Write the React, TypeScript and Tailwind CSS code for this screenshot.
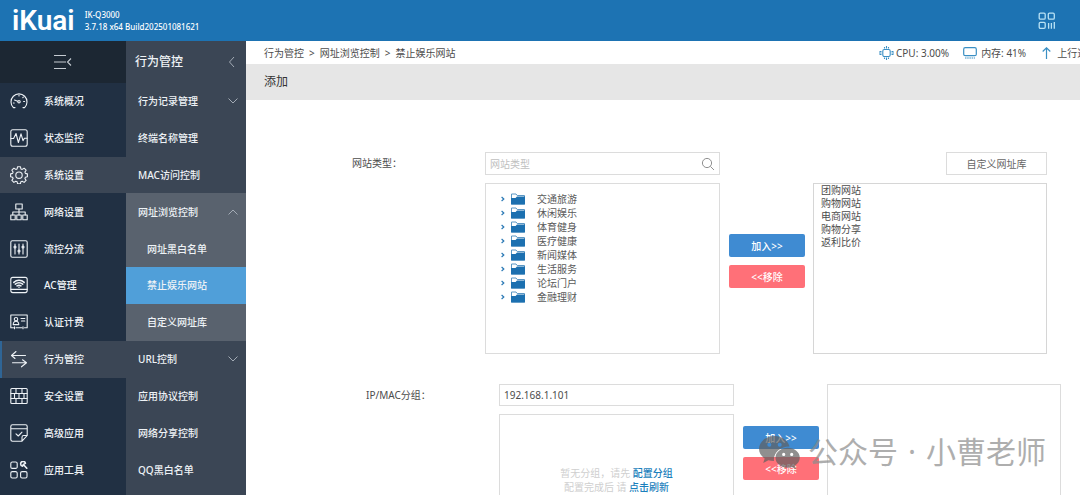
import { ReactNode } from "react";

const svgProps = {
  width: 18,
  height: 18,
  viewBox: "0 0 18 18",
  fill: "none",
  stroke: "currentColor",
  strokeWidth: 1.1,
  strokeLinecap: "round" as const,
  strokeLinejoin: "round" as const,
  "aria-hidden": true,
};

const icons: Record<string, ReactNode> = {
  gauge: (
    <>
      <path d="M5 15.600H3.400A8 8 0 1 1 14.600 15.600H13" />
      <path d="M4.500 8l3.200 1.200M9 3.200v.8M13.300 5.200l-.5.500M14.600 9.500h-1M3.400 11h.8" />
      <circle cx="9" cy="9.700" r="1.200" />
    </>
  ),
  pulse: (
    <>
      <rect x="0.8" y="0.8" width="16.4" height="16.4" rx="2" />
      <path d="M1 9.500h2.600L6 4.500l2.400 9 2.600-8.600 2 6.800 1.400-2.400H17" />
    </>
  ),
  gear: (
    <>
      <path d="M7.600 .7h2.800l.5 2.200 1.300.5 1.900-1.200 2 2-1.200 1.900.5 1.300 2 .5v2.800l-2 .5-.5 1.300 1.200 1.900-2 2-1.900-1.200-1.300.5-.5 2.100H7.600l-.5-2.100-1.300-.5-1.900 1.200-2-2 1.200-1.900-.5-1.300-2-.5V7.900l2-.5.5-1.300-1.200-1.900 2-2 1.900 1.200 1.300-.5z" />
      <circle cx="9" cy="9.200" r="3.200" />
    </>
  ),
  network: (
    <>
      <rect x="5.800" y="1" width="6.400" height="5" />
      <path d="M9 6v3M2.800 12V9h12.400v3M9 9v3" />
      <rect x="0.800" y="12" width="4.400" height="4.800" />
      <rect x="6.800" y="12" width="4.400" height="4.800" />
      <rect x="12.800" y="12" width="4.400" height="4.800" />
    </>
  ),
  sliders: (
    <>
      <rect x="0.800" y="0.800" width="16.400" height="16.400" rx="1.500" />
      <path d="M5 4v10M9 4v10M13 4v10" />
      <circle cx="5" cy="7" r="1" />
      <circle cx="9" cy="11" r="1" />
      <circle cx="13" cy="7" r="1" />
    </>
  ),
  ac: (
    <>
      <rect x="0.800" y="1.400" width="16.400" height="15.200" rx="2" />
      <path d="M1 13.400h16" />
      <path d="M3.800 6.400c3-2.800 7.400-2.800 10.400 0M5.300 8.200c2.200-1.800 5.200-1.800 7.400 0M7 9.900c1.200-.9 2.800-.9 4 0M9 11.200v.1" strokeWidth="1.500" />
    </>
  ),
  idcard: (
    <>
      <path d="M3.500 14.800H.800V2h16.400v12.800H14.500M6 14.800h6" />
      <circle cx="6" cy="6.200" r="1.700" />
      <path d="M3.200 11.600c.2-4.400 5.400-4.400 5.600 0zM11 5.500h3.800M11.500 8h3.300M4.500 13.800v2M13 13.800v2" />
    </>
  ),
  arrows: (
    <>
      <path d="M15.500 5.500H1.500L6 1.500M1.500 5.500l3.500 3" />
      <path d="M2.500 12.800h14L12.500 9.800M16.500 12.800l-5 4" />
    </>
  ),
  wall: (
    <>
      <rect x="0.800" y="1.500" width="16.400" height="15" rx="1" />
      <path d="M1 6.500h16M1 11.500h16M6 1.500v5M12 1.500v5M9 6.500v5M4.500 6.500v5M14 6.500v5M6 11.500v5M12 11.500v5" />
    </>
  ),
  sheet: (
    <path d="M17.200 11.500V2.500Q17.200.800 15.500.800h-13Q.800.800.800 2.500v13q0 1.700 1.700 1.700h9.500zM12 17v-3.800q0-1.700 1.700-1.700h3.500M1 4.800h16M6 9.800l2.300 2.200 3.700-3.800" />
  ),
  tools: (
    <>
      <rect x="0.800" y="1" width="6.400" height="6.400" rx="1.500" />
      <rect x="0.800" y="10.600" width="6.400" height="6.400" rx="1.500" />
      <rect x="10.600" y="10.600" width="6.400" height="6.400" rx="1.500" />
      <path d="M12.600 5.200a2.400 2.400 0 1 1 2.800-2.800L13.400 3.400zM14 4.200l2.800 3" strokeWidth="1.600" />
    </>
  ),
};

const mainMenu = [
  { label: "系统概况", icon: "gauge" },
  { label: "状态监控", icon: "pulse" },
  { label: "系统设置", icon: "gear", state: "hover" },
  { label: "网络设置", icon: "network" },
  { label: "流控分流", icon: "sliders" },
  { label: "AC管理", icon: "ac" },
  { label: "认证计费", icon: "idcard" },
  { label: "行为管控", icon: "arrows", state: "current" },
  { label: "安全设置", icon: "wall" },
  { label: "高级应用", icon: "sheet" },
  { label: "应用工具", icon: "tools" },
];

const subMenu = [
  { label: "行为记录管理", arrow: "down" },
  { label: "终端名称管理" },
  { label: "MAC访问控制" },
  { label: "网址浏览控制", arrow: "up", tone: "open" },
  { label: "网址黑白名单", tone: "child" },
  { label: "禁止娱乐网站", tone: "active" },
  { label: "自定义网址库", tone: "child" },
  { label: "URL控制", arrow: "down" },
  { label: "应用协议控制" },
  { label: "网络分享控制" },
  { label: "QQ黑白名单" },
];

const subTone: Record<string, string> = {
  open: "bg-[#59626e] pl-3",
  child: "bg-[#59626e] pl-[21px]",
  active: "bg-[#509fd9] pl-[21px]",
};

const mainTone: Record<string, string> = {
  hover: "bg-[#3b4655] border-[#3b4655]",
  current: "bg-[#3b4655] border-[#2f6596]",
};

const categories = ["交通旅游", "休闲娱乐", "体育健身", "医疗健康", "新闻媒体", "生活服务", "论坛门户", "金融理财"];
const selected = ["团购网站", "购物网站", "电商网站", "购物分享", "返利比价"];

function Chevron({ dir }: { dir: string }) {
  const d = dir === "down" ? "M1.500 3.500l4.500 4.500 4.500-4.500" : dir === "up" ? "M1.500 8.500l4.500-4.500 4.500 4.500" : "M8 1l-4.500 5 4.500 5";
  return (
    <svg width="12" height="12" viewBox="0 0 12 12" fill="none" stroke="#a3abb5" strokeWidth="1" aria-hidden>
      <path d={d} />
    </svg>
  );
}

function Folder() {
  return (
    <svg width="14" height="12" viewBox="0 0 14 12" aria-hidden>
      <path d="M.5 11V1h4.500l1.200 1.500h7.300V11z" fill="#fff" stroke="#5b97c4" />
      <path d="M0 11.500V5h4.500L6 3.600h8v7.900z" fill="#1c70b0" />
    </svg>
  );
}

function TransferButtons() {
  return (
    <div className="flex w-[76px] flex-col gap-2 font-medium text-white">
      <button className="h-[23px] rounded-xs bg-[#3f8bd2]">加入&gt;&gt;</button>
      <button className="h-[23px] rounded-xs bg-[#ff7078]">&lt;&lt;移除</button>
    </div>
  );
}

export default function App() {
  return (
    <div className="relative flex h-screen flex-col overflow-hidden bg-white text-[10px] leading-[14px] text-[#4c4c4c] [font-family:'Noto_Sans','Noto_Sans_CJK_SC',sans-serif]">
      <header className="flex h-[41px] shrink-0 items-center bg-[#1d73b3] pr-6 pl-3 text-white">
        <span className="text-[28px] leading-7 font-semibold [font-family:Roboto,sans-serif]">iKuai</span>
        <div className="ml-2.5 text-[8px] leading-3 font-medium">
          <div>IK-Q3000</div>
          <div>3.7.18 x64 Build202501081621</div>
        </div>
        <button className="ml-auto" aria-label="应用">
          <svg width="18" height="18" viewBox="0 0 18 18" fill="none" stroke="#b9e2f5" strokeWidth="1.300">
            <rect x="1.200" y="1.200" width="6" height="6" rx="1.200" />
            <rect x="10.300" y="1.200" width="6" height="6" rx="1.200" />
            <rect x="1.200" y="10.300" width="6" height="6" rx="1.200" />
            <path d="M10.600 11v5.800M13.400 11v5.800M16.300 10v6.800" />
          </svg>
        </button>
      </header>

      <div className="flex min-h-0 flex-1">
        <nav className="w-[126px] shrink-0 bg-[#213043] text-[#eef2f6]">
          <button className="flex h-[42px] w-full items-center justify-center bg-[#1c2733]" aria-label="收起菜单">
            <svg width="18" height="16" viewBox="0 0 18 16" fill="none" stroke="#c5cbd2" strokeWidth="1.100">
              <path d="M0 1.500h12M0 8h12M0 14.500h12M17 4.500L13.500 8l3.500 3.500" />
            </svg>
          </button>
          <ul className="grid h-[405px] auto-rows-fr font-medium">
            {mainMenu.map((m) => (
              <li key={m.label} className="grid">
                <a
                  href="#"
                  className={`flex items-center gap-4 border-l-2 pl-2 ${m.state ? mainTone[m.state] : "border-[#213043]"}`}
                >
                  <svg {...svgProps}>{icons[m.icon]}</svg>
                  {m.label}
                </a>
              </li>
            ))}
          </ul>
        </nav>

        <nav className="w-[120px] shrink-0 bg-[#3b4655] text-[#eef2f6]">
          <div className="flex h-[42px] items-center justify-between pr-2 pl-[9px] text-xs font-medium">
            行为管控
            <Chevron dir="left" />
          </div>
          <ul className="grid h-[405px] auto-rows-fr font-medium">
            {subMenu.map((m) => (
              <li key={m.label} className="grid">
                <a href="#" className={`flex items-center justify-between pr-[7px] ${m.tone ? subTone[m.tone] : "pl-3"}`}>
                  {m.label}
                  {m.arrow && <Chevron dir={m.arrow} />}
                </a>
              </li>
            ))}
          </ul>
        </nav>

        <main className="min-w-0 flex-1 overflow-hidden">
          <div className="flex h-[23px] items-center justify-between pl-[18px] whitespace-nowrap">
            <div className="flex gap-[5px]">
              <span>行为管控</span>
              <span>&gt;</span>
              <span>网址浏览控制</span>
              <span>&gt;</span>
              <span>禁止娱乐网站</span>
            </div>
            <div className="flex w-[201px] shrink-0 overflow-hidden">
              <span className="mr-[14px] flex shrink-0 items-center gap-0.5">
                <svg width="15" height="14" viewBox="0 0 15 14" fill="none" stroke="#3a8fc4" strokeWidth="1.100" aria-hidden>
                  <rect x="3.800" y="3.500" width="7.400" height="7" rx="1.500" />
                  <path d="M5.500 1v1.500M7.500 0v2.500M9.500 1v1.500M5.500 11.500V13M7.500 11.500V14M9.500 11.500V13M.5 5.500H2.500M0 7H2.500M.5 8.500H2.500M12.500 5.500h2M12.500 7H15M12.500 8.500h2" />
                </svg>
                CPU: 3.00%
              </span>
              <span className="mr-4 flex shrink-0 items-center gap-1">
                <svg width="14" height="12" viewBox="0 0 14 12" fill="none" stroke="#3a8fc4" strokeWidth="1.200" aria-hidden>
                  <rect x="0.700" y="0.700" width="12.600" height="8" rx="1.500" />
                  <path d="M2 11h10" strokeDasharray="1.500 .7" />
                </svg>
                内存: 41%
              </span>
              <span className="flex shrink-0 items-center gap-1.5">
                <svg width="9" height="12" viewBox="0 0 9 12" fill="none" stroke="#3a8fc4" strokeWidth="1.200" aria-hidden>
                  <path d="M4.500 12V1M.7 4.500L4.500.800l3.800 3.700" />
                </svg>
                上行速率
              </span>
            </div>
          </div>
          <h1 className="flex h-9 items-center bg-[#e6e6e6] pl-[18px] text-xs text-[#333]">添加</h1>

          <form className="flex flex-col gap-[30px] pt-[52px]" onSubmit={(e) => e.preventDefault()}>
            <div className="flex pl-[106px]">
              <label htmlFor="site-type" className="w-[133px] shrink-0 pt-1">网站类型：</label>
              <div className="flex w-[235px] shrink-0 flex-col gap-2">
                <div className="flex h-[23px] items-center border border-[#dcdcdc] px-1">
                  <input id="site-type" placeholder="网站类型" className="min-w-0 flex-1 outline-none placeholder:text-[#c0c0c0]" />
                  <svg width="14" height="14" viewBox="0 0 14 14" fill="none" stroke="#909090" strokeWidth="1" aria-hidden>
                    <circle cx="6" cy="6" r="4.600" />
                    <path d="M9.400 9.400l3.600 3.600" />
                  </svg>
                </div>
                <ul className="h-[171px] border border-[#dcdcdc] pt-2 pl-[15px] text-[#5a5a5a]">
                  {categories.map((c) => (
                    <li key={c} className="flex items-center">
                      <svg width="4" height="6" viewBox="0 0 4 6" fill="none" stroke="#2a79b5" strokeWidth="1.200" aria-hidden>
                        <path d="M.6 1L2.800 3 .6 5" />
                      </svg>
                      <span className="mr-3 ml-1.5">
                        <Folder />
                      </span>
                      {c}
                    </li>
                  ))}
                </ul>
              </div>
              <div className="mr-2 ml-[9px] pt-[82px]">
                <TransferButtons />
              </div>
              <div className="flex w-[234px] shrink-0 flex-col items-end gap-2">
                <button className="h-[23px] w-[101px] border border-[#dcdcdc] text-[#666]">自定义网址库</button>
                <ul className="h-[171px] w-full border border-[#d6d6d6] pl-[7px] leading-[13px]">
                  {selected.map((s) => (
                    <li key={s}>{s}</li>
                  ))}
                </ul>
              </div>
            </div>

            <div className="flex pl-[120px]">
              <label htmlFor="ip-group" className="w-[133px] shrink-0 pt-1">IP/MAC分组：</label>
              <div className="flex w-[235px] shrink-0 flex-col gap-2">
                <input id="ip-group" defaultValue="192.168.1.101" className="h-[22px] border border-[#dcdcdc] px-1 outline-none" />
                <div className="h-[171px] border border-[#dcdcdc] pt-[51px] text-center text-[#cfcfcf]">
                  <p>暂无分组，请先 <a href="#" className="font-medium text-[#1c7fbc]">配置分组</a></p>
                  <p>配置完成后 请 <a href="#" className="font-medium text-[#1c7fbc]">点击刷新</a></p>
                </div>
              </div>
              <div className="mr-2 ml-[9px] pt-[42px]">
                <TransferButtons />
              </div>
              <div className="h-[201px] w-[234px] shrink-0 border border-[#dcdcdc]" />
            </div>
          </form>
        </main>
      </div>

      <div className="pointer-events-none absolute right-[34px] bottom-[25px] flex items-center gap-2 text-[#8c8c8c] opacity-70">
        <svg width="41" height="33" viewBox="0 0 41 33" aria-hidden>
          <path
            fill="#606060"
            fillRule="evenodd"
            d="M15.500 0C7 0 0 5.700 0 12.700c0 4 2.200 7.400 5.700 9.800L4.200 27l5.200-2.700c1.800.5 3.700.8 5.600.8C14 17 21 10.400 30.500 10.400 29 4.400 22.800 0 15.500 0zM10.300 6.700a2 2 0 1 1 0 4 2 2 0 0 1 0-4zm10.400 0a2 2 0 1 1 0 4 2 2 0 0 1 0-4z"
          />
          <path
            fill="#606060"
            fillRule="evenodd"
            d="M28.700 11.800c-6.800 0-12.200 4.500-12.200 10s5.400 10 12.200 10c1.500 0 3-.3 4.300-.7l4 2-1.200-3.400c3-1.900 5-4.700 5-7.900 0-5.500-5.300-10-12.100-10zm-4 5a1.600 1.600 0 1 1 0 3.200 1.600 1.600 0 0 1 0-3.200zm8 0a1.600 1.600 0 1 1 0 3.200 1.600 1.600 0 0 1 0-3.200z"
          />
        </svg>
        <div className="flex gap-2.5 text-[30px] leading-9 whitespace-nowrap">
          <span>公众号</span>
          <span>·</span>
          <span>小曹老师</span>
        </div>
      </div>
    </div>
  );
}
